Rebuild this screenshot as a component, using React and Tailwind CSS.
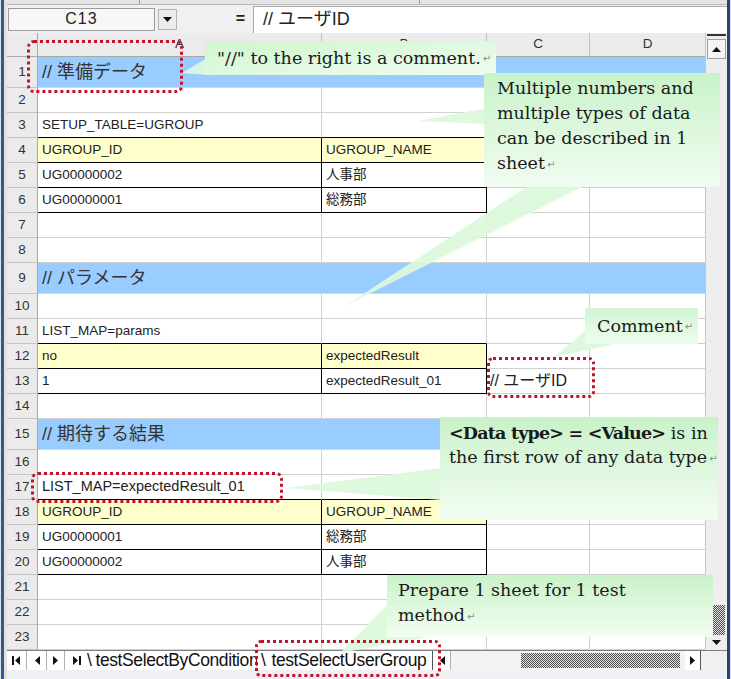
import React from "react";
import clsx from "clsx";

const rows = [
  { n: 1, head: "// 準備データ" },
  { n: 2 },
  { n: 3, a: "SETUP_TABLE=UGROUP" },
  { n: 4, a: "UGROUP_ID", b: "UGROUP_NAME", t: "hdr" },
  { n: 5, a: "UG00000002", b: "人事部", t: "row" },
  { n: 6, a: "UG00000001", b: "総務部", t: "row" },
  { n: 7 },
  { n: 8 },
  { n: 9, head: "// パラメータ" },
  { n: 10 },
  { n: 11, a: "LIST_MAP=params" },
  { n: 12, a: "no", b: "expectedResult", t: "hdr" },
  { n: 13, a: "1", b: "expectedResult_01", t: "row", c: "// ユーザID" },
  { n: 14 },
  { n: 15, head: "// 期待する結果" },
  { n: 16 },
  { n: 17, a: "LIST_MAP=expectedResult_01", big: true },
  { n: 18, a: "UGROUP_ID", b: "UGROUP_NAME", t: "hdr" },
  { n: 19, a: "UG00000001", b: "総務部", t: "row" },
  { n: 20, a: "UG00000002", b: "人事部", t: "row" },
  { n: 21 },
  { n: 22 },
  { n: 23 },
];

const sans = "font-['Liberation_Sans','Noto_Sans_CJK_JP',sans-serif]";
const serif = "font-['DejaVu_Serif','Liberation_Serif',serif]";

const Ret = () => (
  <span className="ml-[2px] align-middle text-[10px] text-[#8a8a8a] font-['DejaVu_Sans',sans-serif]">↵</span>
);

const Tri = ({ dir, bar }) => (
  <svg width="10" height="9" viewBox="0 0 10 9">
    {dir === "left" ? <polygon points="8,0 8,9 3,4.5" fill="#111" /> : <polygon points="2,0 2,9 7,4.5" fill="#111" />}
    {bar && (dir === "left" ? <rect x="0" y="0" width="2" height="9" fill="#111" /> : <rect x="8" y="0" width="2" height="9" fill="#111" />)}
  </svg>
);

// dithered scroll thumb
const Thumb = ({ w, h, id }) => (
  <svg width={w} height={h} className="block shrink-0">
    <defs>
      <pattern id={id} width="2" height="2" patternUnits="userSpaceOnUse">
        <rect width="2" height="2" fill="#e0e0e0" />
        <rect width="1" height="1" fill="#505050" />
        <rect x="1" y="1" width="1" height="1" fill="#505050" />
      </pattern>
    </defs>
    <rect width={w} height={h} fill={`url(#${id})`} />
  </svg>
);

function SheetRow({ r, next }) {
  const h = r.head ? "h-[31px]" : "h-[25px]";
  const inTbl = !!r.t;
  const bBlack = inTbl || next?.t === "hdr";
  return (
    <div className={clsx("flex", h)}>
      <div className="w-[31px] shrink-0 bg-[#ebebeb] border-r border-b border-r-[#a8a8a8] border-b-[#c4c4c4] flex items-center justify-center text-[13.5px] text-[#333]">
        {r.n}
      </div>
      {r.head ? (
        <div className="w-[667px] shrink-0 bg-[#99ccff] border-b border-b-[#c9d9ea] flex items-center pl-[4px] text-[18px] text-[#333]">
          {r.head}
        </div>
      ) : (
        <>
          <div
            className={clsx(
              "w-[284px] shrink-0 border-r border-b flex items-center pl-[4px] whitespace-nowrap text-[#222]",
              inTbl ? "border-r-black" : "border-r-[#d0d0d0]",
              bBlack ? "border-b-black" : "border-b-[#d0d0d0]",
              r.t === "hdr" && "bg-[#ffffcc]",
              r.big ? "text-[14.5px]" : "text-[13.5px]"
            )}
          >
            {r.a}
          </div>
          <div
            className={clsx(
              "w-[165px] shrink-0 border-r border-b flex items-center pl-[4px] whitespace-nowrap text-[13.5px] text-[#222]",
              inTbl ? "border-r-black" : "border-r-[#d0d0d0]",
              bBlack ? "border-b-black" : "border-b-[#d0d0d0]",
              r.t === "hdr" && "bg-[#ffffcc]"
            )}
          >
            {r.b}
          </div>
          <div className="w-[103px] shrink-0 border-r border-b border-r-[#d0d0d0] border-b-[#d0d0d0] flex items-center pl-[3px] whitespace-nowrap text-[16px] text-[#222]">
            {r.c}
          </div>
          <div className="w-[115px] shrink-0 border-b border-b-[#d0d0d0]" />
        </>
      )}
    </div>
  );
}

export default function App() {
  return (
    <div className={clsx("relative w-[731px] h-[679px] overflow-hidden bg-[#f0f0f0] flex", sans)}>
      {/* left window frame */}
      <div className="w-[7px] shrink-0 bg-[#e2e2e2] pl-[1px]">
        <div className="w-[3px] h-full bg-[#2f5a99]" />
      </div>

      <div className="w-[720px] shrink-0 flex flex-col">
        {/* toolbar remnant */}
        <div className="h-[5px] bg-[#e4e4e4] border-b border-b-[#b8b8b8] flex">
          <div className="w-[133px] border-r border-r-[#a0a0a0]" />
          <div className="w-[280px] border-r border-r-[#a0a0a0]" />
        </div>

        {/* formula bar */}
        <div className="h-[28px] flex items-center bg-[#f0f0f0]">
          <div className="ml-[1px] w-[147px] h-[23px] bg-[#f7f7f7] border border-[#9c9c9c] flex items-center justify-center text-[16px] tracking-[1px] text-[#222]">
            C13
          </div>
          <div className="ml-[3px] w-[19px] h-[21px] bg-[#ececec] border border-[#b4b4b4] flex items-center justify-center">
            <svg width="9" height="5" viewBox="0 0 9 5">
              <polygon points="0,0 9,0 4.5,5" fill="#111" />
            </svg>
          </div>
          <div className="w-[76px] flex justify-end pr-[8px] text-[16px] font-bold text-[#222]">=</div>
          <div className="w-[474px] h-[27px] bg-white border-l border-t border-[#a8a8a8] flex items-center pl-[9px] text-[18px] text-[#222]">
            // ユーザID
          </div>
        </div>

        {/* sheet + vertical scrollbar */}
        <div className="h-[617px] flex">
          <div className="w-[698px] shrink-0 bg-white">
            <div className="h-[24px] flex bg-[#ebebeb] text-[13.5px] text-[#333]">
              <div className="w-[31px] border-r border-b border-r-[#a8a8a8] border-b-[#a8a8a8]" />
              <div className="w-[284px] border-r border-b border-r-[#c0c0c0] border-b-[#a8a8a8] flex items-center justify-center">A</div>
              <div className="w-[165px] border-r border-b border-r-[#c0c0c0] border-b-[#a8a8a8] flex items-center justify-center">B</div>
              <div className="w-[103px] border-r border-b border-r-[#c0c0c0] border-b-[#a8a8a8] flex items-center justify-center">C</div>
              <div className="w-[115px] border-b border-b-[#a8a8a8] flex items-center justify-center">D</div>
            </div>
            {rows.map((r, i) => (
              <SheetRow key={r.n} r={r} next={rows[i + 1]} />
            ))}
          </div>

          <div className="w-[22px] shrink-0 flex flex-col bg-[#eeeeee] border-l border-l-[#c8c8c8]">
            <div className="h-[5px] border-t-2 border-t-[#333] mx-[1px] mt-[1px]" />
            <div className="h-[20px] mx-[1px] bg-[#f4f4f4] border border-[#a0a0a0] flex items-center justify-center">
              <svg width="9" height="5" viewBox="0 0 9 5">
                <polygon points="0,5 9,5 4.5,0" fill="#111" />
              </svg>
            </div>
            <div className="flex-1" />
            <div className="mx-[2px]">
              <Thumb w={17} h={30} id="vthumb" />
            </div>
            <div className="h-[15px] flex items-center justify-center">
              <svg width="9" height="5" viewBox="0 0 9 5">
                <polygon points="0,0 9,0 4.5,5" fill="#111" />
              </svg>
            </div>
          </div>
        </div>

        {/* sheet tabs + horizontal scrollbar */}
        <div className="h-[20px] flex items-center bg-white border-t border-t-[#808080] text-[17.5px] text-[#111]">
          <div className="w-[80px] h-full flex items-center">
            <div className="w-[20px] h-full flex items-center justify-center border-r border-r-[#b0b0b0]"><Tri dir="left" bar /></div>
            <div className="w-[20px] h-full flex items-center justify-center border-r border-r-[#b0b0b0]"><Tri dir="left" /></div>
            <div className="w-[18px] h-full flex items-center justify-center border-r border-r-[#b0b0b0]"><Tri dir="right" /></div>
            <div className="w-[22px] h-full flex items-center justify-center"><Tri dir="right" bar /></div>
          </div>
          <div className="w-[170px] h-full overflow-hidden whitespace-nowrap flex items-center tracking-[-0.4px]">
            <span className="mr-[4px]">\</span>testSelectByCondition
          </div>
          <div className="w-[175px] h-full overflow-hidden whitespace-nowrap flex items-center bg-white tracking-[-0.4px]">
            <span className="ml-[4px] mr-[6px]">\</span>testSelectUserGroup
          </div>
          <div className="w-[1px] h-full bg-[#555]" />
          <div className="w-[17px] h-full flex items-center justify-center"><Tri dir="left" /></div>
          <div className="w-[235px] h-full flex items-center bg-[#f2f2f2] border-l border-l-[#b0b0b0]">
            <div className="w-[70px] shrink-0" />
            <Thumb w={159} h={15} id="hthumb" />
          </div>
          <div className="w-[15px] h-full flex items-center justify-center"><Tri dir="right" /></div>
          <div className="w-[27px] h-full border-l border-l-[#555] bg-[#f0f0f0]" />
        </div>
        <div className="flex-1 bg-[#eef0f4]" />
      </div>

      {/* right window frame */}
      <div className="w-[4px] shrink-0 bg-[#1f4482] border-r border-r-[#dde]" />

      {/* callout tails */}
      <svg className="absolute left-0 top-0 pointer-events-none" width="731" height="679" viewBox="0 0 731 679">
        <g fill="#dcf8dc" fillOpacity="0.92">
          <polygon points="207,58 207,75 182,73" />
          <polygon points="486,108 486,124 418,121" />
          <polygon points="528,186 584,186 345,306" />
          <polygon points="588,328 612,345 554,357" />
          <polygon points="441,468 441,500 286,488" />
          <polygon points="389,603 424,638 340,653" />
        </g>
      </svg>

      {/* callout boxes */}
      <div className={clsx("absolute left-[205px] top-[41px] w-[291px] h-[34px] bg-linear-to-br from-[#cff5cf] to-[#f0fdf0] flex items-center pl-[12px] text-[17.5px] text-[#1a1a1a]", serif)}>
        <span>"//" to the right is a comment.</span>
        <Ret />
      </div>
      <div className={clsx("absolute left-[484px] top-[73px] w-[236px] h-[114px] bg-linear-to-b from-[#c9f2c9] to-[#f1fcf1] pl-[13px] pt-[3px] text-[17.5px] leading-[25px] text-[#1a1a1a]", serif)}>
        Multiple numbers and multiple types of data can be described in 1 sheet
        <Ret />
      </div>
      <div className={clsx("absolute left-[585px] top-[308px] w-[113px] h-[36px] bg-linear-to-b from-[#d2f6d2] to-[#eefcee] flex items-center pl-[12px] text-[17.5px] text-[#1a1a1a]", serif)}>
        <span>Comment</span>
        <Ret />
      </div>
      <div className={clsx("absolute left-[440px] top-[417px] w-[278px] h-[103px] bg-linear-to-b from-[#c9f2c9] to-[#f3fdf3] pl-[9px] pt-[4px] text-[17.5px] leading-[24px] text-[#1a1a1a] whitespace-nowrap", serif)}>
        <span className="font-bold tracking-[-0.8px]">&lt;Data type&gt; = &lt;Value&gt;</span> is in
        <br />
        the first row of any data type
        <Ret />
      </div>
      <div className={clsx("absolute left-[387px] top-[575px] w-[326px] h-[62px] bg-linear-to-b from-[#c9f2c9] to-[#f3fdf3] pl-[11px] pt-[3px] pr-[80px] text-[17.5px] leading-[25px] text-[#1a1a1a]", serif)}>
        Prepare 1 sheet for 1 test method
        <Ret />
      </div>

      {/* red dotted highlights */}
      <div className="absolute left-[27px] top-[40px] w-[156px] h-[53px] rounded-[7px] border-[3px] border-dotted border-[#c0142c]" />
      <div className="absolute left-[487px] top-[357px] w-[108px] h-[41px] rounded-[6px] border-[3px] border-dotted border-[#c0142c]" />
      <div className="absolute left-[31px] top-[472px] w-[252px] h-[31px] rounded-[7px] border-[3px] border-dotted border-[#c0142c]" />
      <div className="absolute left-[255px] top-[640px] w-[186px] h-[37px] rounded-[6px] border-[3px] border-dotted border-[#c0142c]" />
    </div>
  );
}
